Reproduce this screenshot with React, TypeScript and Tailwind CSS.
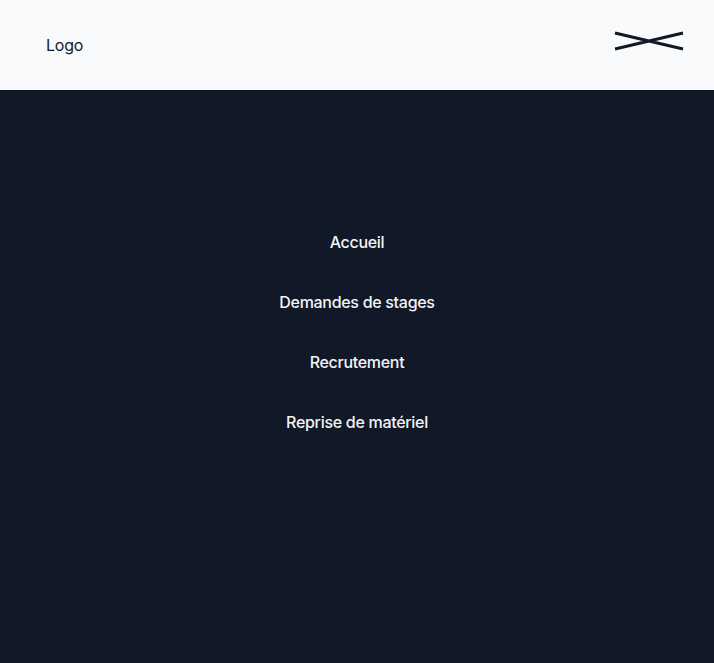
const links = ['Accueil', 'Demandes de stages', 'Recrutement', 'Reprise de matériel']

export default function App() {
  return (
    <div className="min-h-screen flex flex-col bg-[#111827]" style={{ fontFamily: 'Inter, "Noto Sans", sans-serif' }}>
      {/* Header */}
      <header className="h-[90px] flex items-center justify-between pl-[46px] pr-[30px] bg-[#f9fafb]">
        <span className="text-base text-[#111827] tracking-[-0.2px]">Logo</span>
        <button type="button" className="w-[70px] h-[20px] mb-2 flex items-center justify-center" aria-label="Fermer">
          <svg width="70" height="20" viewBox="0 0 70 20" fill="none">
            <path d="M1 2L69 18M1 18L69 2" stroke="#111827" strokeWidth="3" />
          </svg>
        </button>
      </header>

      {/* Menu */}
      <nav className="flex-1 flex flex-col items-center pt-[122px]">
        {links.map((label) => (
          <a key={label} href="#" className="py-[18px] text-base leading-6 font-medium text-[#f3f4f6] tracking-[-0.3px]">
            {label}
          </a>
        ))}
      </nav>
    </div>
  )
}
